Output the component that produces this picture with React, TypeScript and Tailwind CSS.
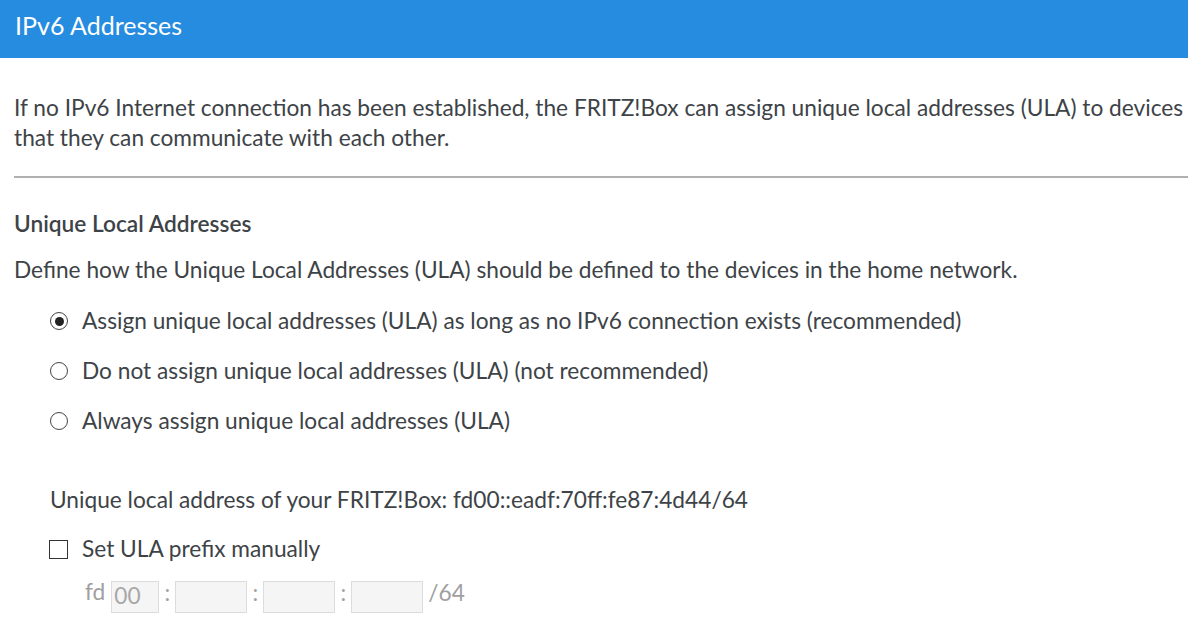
import React from "react";

function Radio({ checked, label }: { checked?: boolean; label: string }) {
  return (
    <div className="flex items-center h-[30px] pl-[36px]">
      <span className="w-[18px] h-[18px] rounded-full border-[1.5px] border-[#444] flex items-center justify-center shrink-0">
        {checked && <span className="w-[9px] h-[9px] rounded-full bg-[#222]" />}
      </span>
      <span className="ml-[14px]">{label}</span>
    </div>
  );
}

function Box({ w, value }: { w: string; value?: string }) {
  return (
    <div className={`${w} h-[32px] border border-[#dcdcdc] bg-[#f5f5f5] flex items-end pl-[2px] pb-[1px] text-[#a8a8a8]`}>
      {value}
    </div>
  );
}

export default function App() {
  return (
    <div className="w-[1188px] h-[623px] overflow-hidden bg-white text-[#3d4347] font-['Lato','Open_Sans',sans-serif] text-[22.7px] leading-[30px]">
      <div className="h-[58px] bg-[#268ce0] flex items-center px-[15px] pb-[8px] text-white text-[25px]">
        IPv6 Addresses
      </div>
      <div className="pl-[14px] pt-[35px]">
        <p className="whitespace-nowrap">
          If no IPv6 Internet connection has been established, the FRITZ!Box can assign unique local addresses (ULA) to devices
        </p>
        <p className="whitespace-nowrap">that they can communicate with each other.</p>
        <div className="mt-[23px] h-[2px] bg-[#b0b0b0]" />
        <h2 className="mt-[31px] font-semibold">Unique Local Addresses</h2>
        <p className="mt-[16px]">
          Define how the Unique Local Addresses (ULA) should be defined to the devices in the home network.
        </p>
        <div className="mt-[21px] flex flex-col gap-[20px]">
          <Radio checked label="Assign unique local addresses (ULA) as long as no IPv6 connection exists (recommended)" />
          <Radio label="Do not assign unique local addresses (ULA) (not recommended)" />
          <Radio label="Always assign unique local addresses (ULA)" />
        </div>
        <p className="mt-[49px] pl-[36px]">
          Unique local address of your FRITZ!Box: fd00::eadf:70ff:fe87:4d44/64
        </p>
        <div className="mt-[19px] flex items-center h-[30px] pl-[35px]">
          <span className="w-[19px] h-[19px] border-[1.5px] border-[#333] shrink-0" />
          <span className="ml-[14px]">Set ULA prefix manually</span>
        </div>
        <div className="mt-[17px] flex items-start pl-[71px] text-[#a0a0a0]">
          <span className="mr-[6px] leading-[22px]">fd</span>
          <Box w="w-[48px]" value="00" />
          <span className="w-[16px] text-center leading-[24px]">:</span>
          <Box w="w-[72px]" />
          <span className="w-[16px] text-center leading-[24px]">:</span>
          <Box w="w-[72px]" />
          <span className="w-[16px] text-center leading-[24px]">:</span>
          <Box w="w-[72px]" />
          <span className="ml-[5px] leading-[24px]">/64</span>
        </div>
      </div>
    </div>
  );
}
